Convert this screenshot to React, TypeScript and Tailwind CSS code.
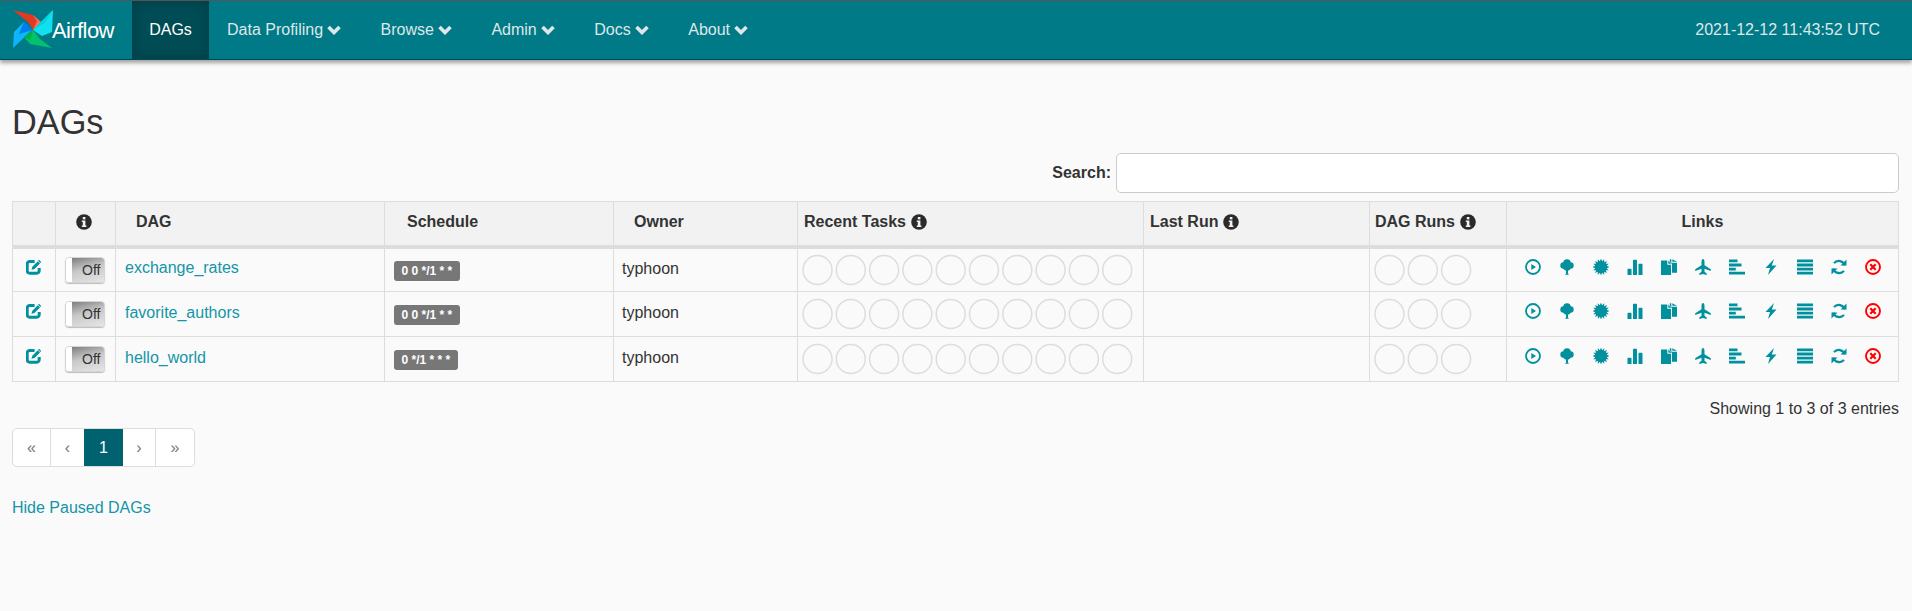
import { ReactNode } from 'react';

const NAV = ['Data Profiling', 'Browse', 'Admin', 'Docs', 'About'];
const DAGS = [
  { name: 'exchange_rates', schedule: '0 0 */1 * *' },
  { name: 'favorite_authors', schedule: '0 0 */1 * *' },
  { name: 'hello_world', schedule: '0 */1 * * *' },
];

function Glyph({ children, className = '' }: { children: ReactNode; className?: string }) {
  return (
    <svg viewBox="0 0 16 16" className={`w-4 h-4 shrink-0 ${className}`} fill="currentColor">
      {children}
    </svg>
  );
}

function Logo() {
  return (
    <svg viewBox="0 0 42 42" className="w-[42px] h-[42px] shrink-0">
      <path d="M1 1 L21 6 L29 13 L21 21 L17 14 Z" fill="#e43921" />
      <path d="M21 6 L29 13 L21 21 L25 12 Z" fill="#f4725a" />
      <path d="M41 1 L40 23 L30 27 L21 21 L29 13 Z" fill="#11e1ee" />
      <path d="M41 1 L29 13 L21 21 L33 14 Z" fill="#04d3e0" />
      <path d="M1 39 L2 23 L12 13 L20 21 Z" fill="#0cb6ff" />
      <path d="M12 13 L21 21 L7 25 Z" fill="#017cee" />
      <path d="M40 39 L18 35 L12 28 L21 21 L28 30 Z" fill="#00c26e" />
      <path d="M21 21 L12 28 L18 31 Z" fill="#00ad46" />
    </svg>
  );
}

function Info() {
  return (
    <Glyph className="text-[#2d2a2a]">
      <circle cx="8" cy="8" r="7.8" />
      <rect x="6.800" y="3" width="2.600" height="2.400" fill="#f2f2f2" />
      <path d="M5.800 6.600h3.600v5h1v1.500H5.800v-1.500h1v-3.500h-1z" fill="#f2f2f2" />
    </Glyph>
  );
}

function Chevron() {
  return (
    <svg viewBox="0 0 14 10" className="w-[14px] h-[10px] ml-1 mr-[3.5px] inline-block" fill="none" stroke="currentColor" strokeWidth="3.6">
      <path d="M1.500 2 L7 7.500 L12.500 2" />
    </svg>
  );
}

function Edit() {
  return (
    <Glyph className="text-[#00909e]">
      <path d="M13.200 9v2.800a2.400 2.400 0 0 1-2.400 2.400H3.600a2.400 2.400 0 0 1-2.400-2.400V5a2.400 2.400 0 0 1 2.400-2.400h5" fill="none" stroke="currentColor" strokeWidth="3" />
      <path d="M5.500 10.800l.8-3 5.500-5.600 2.200 2.200-5.500 5.600z" />
      <path d="M13 .8l2.200 2.200-.9.900-2.200-2.200z" />
    </Glyph>
  );
}

function Burst() {
  const pts = Array.from({ length: 32 }, (_, i) => {
    const r = i % 2 ? 5.800 : 8.400;
    const a = (i * Math.PI) / 16;
    return `${(8 + r * Math.cos(a)).toFixed(2)},${(8 + r * Math.sin(a)).toFixed(2)}`;
  }).join(' ');
  return <polygon points={pts} />;
}

const LINK_ICONS: ReactNode[] = [
  <Glyph key="run">
    <circle cx="8" cy="8" r="7" fill="none" stroke="currentColor" strokeWidth="1.800" />
    <path d="M6.300 4.900 L11 8 L6.300 11.100 Z" />
  </Glyph>,
  <Glyph key="tree">
    <circle cx="8" cy="4" r="3.800" />
    <circle cx="4.500" cy="6.500" r="3.200" />
    <circle cx="11.500" cy="6.500" r="3.200" />
    <circle cx="8" cy="8" r="3.800" />
    <path d="M7 9h2v5.500l1 1.300H6l1-1.300z" />
  </Glyph>,
  <Glyph key="graph">
    <Burst />
  </Glyph>,
  <Glyph key="duration">
    <path d="M.5 10.500a.8.800 0 0 1 .8-.8h2.400a.8.800 0 0 1 .8.800V16h-4zM6 1.500a.8.800 0 0 1 .8-.8h2.400a.8.800 0 0 1 .8.800V16H6zM11.500 5.500a.8.800 0 0 1 .8-.8h2.400a.8.800 0 0 1 .8.800V16h-4z" />
  </Glyph>,
  <Glyph key="tries">
    <path d="M0 1.500h6.300v4.200H10V16H0z" />
    <path d="M7.300 1.500V4.700h3.200z" />
    <path d="M10.300 .3v3.500H16v10h-5V5L8.800 2.500V.3z" />
    <path d="M11.300 .3V2.800H16z" />
  </Glyph>,
  <Glyph key="landing">
    <path d="M8 0c1 0 1.500 1.300 1.500 3.200v3l6.300 4v1.900L9.500 9.700v3l2.200 1.800V16L8 15l-3.700 1v-1.500l2.200-1.800v-3L.2 12.100v-1.900l6.300-4v-3C6.500 1.300 7 0 8 0z" />
  </Glyph>,
  <Glyph key="gantt">
    <path d="M0 .5h8.500v2.800H0zM0 4.600h12.500v2.800H0zM0 8.700h6.800v2.800H0zM0 12.800h16v2.800H0z" />
  </Glyph>,
  <Glyph key="code">
    <path d="M11 0 L2.500 9 L7 9 L5 16 L13.500 6.500 L8.800 6.500 Z" />
  </Glyph>,
  <Glyph key="logs">
    <path d="M0 .5h16v2.800H0zM0 4.600h16v2.800H0zM0 8.700h16v2.800H0zM0 12.800h16v2.800H0z" />
  </Glyph>,
  <Glyph key="refresh">
    <path d="M13.800 5.800A6.300 6.300 0 0 0 3 3.500" fill="none" stroke="currentColor" strokeWidth="2.200" transform="translate(0 .6)" />
    <path d="M2.200 10.200A6.300 6.300 0 0 0 13 12.500" fill="none" stroke="currentColor" strokeWidth="2.200" transform="translate(0 -.6)" />
    <path d="M15.500 .5V6.500H9.500z" />
    <path d="M.5 15.500V9.500h6z" />
  </Glyph>,
  <Glyph key="delete" className="text-[#ff0000]">
    <circle cx="8" cy="8" r="7" fill="none" stroke="currentColor" strokeWidth="1.900" />
    <path d="M5.300 5.300 L10.700 10.700 M10.700 5.300 L5.300 10.700" stroke="currentColor" strokeWidth="2.200" />
  </Glyph>,
];

function Circles({ count }: { count: number }) {
  return (
    <svg width={count * 33.3 + 2} height="32" className="block">
      {Array.from({ length: count }, (_, i) => (
        <circle key={i} cx={15.500 + i * 33.300} cy="16" r="14.500" fill="none" stroke="#dddddd" strokeWidth="1.500" />
      ))}
    </svg>
  );
}

function Toggle() {
  return (
    <div className="ml-[9px] w-10 h-[26px] flex rounded-[4px] border border-[#d4d4d4] overflow-hidden shadow-[0_1px_1px_rgba(0,0,0,0.25)]">
      <div className="w-[6px] bg-white" />
      <div className="flex-1 bg-linear-[165deg] from-[#7f7f7f] via-[#c8c8c8] via-45% to-[#e6e6e6] text-[14px] leading-[24px] text-[#333333] pl-[10px]">
        Off
      </div>
    </div>
  );
}

export default function App() {
  const th = 'border border-[#dddddd] border-b-[4px] bg-[#f2f2f2] h-[45px] font-bold align-middle pb-[3px]';
  const td = 'border border-[#dddddd] h-[45px] align-middle';

  return (
    <div className="min-h-[611px] bg-[#fafafa] text-[16px] text-[#333333] font-['Liberation_Sans',Arial,sans-serif]">
      <nav className="h-[60px] bg-[#007a87] border-t border-[#555555] border-b border-b-[#004c55] shadow-[0_3px_4px_rgba(0,0,0,0.35)] flex items-stretch text-[#dfe7e8]">
        <div className="w-[132px] pl-[12px] flex items-center shrink-0">
          <Logo />
          <span className="ml-[-2px] text-[22px] tracking-[-0.6px] text-white">Airflow</span>
        </div>
        <div className="w-[77px] flex items-center justify-center text-white bg-[#004c55] shadow-[inset_0_0_14px_rgba(0,0,0,0.2)]">
          DAGs
        </div>
        <div className="flex items-stretch">
          {NAV.map((item) => (
            <div key={item} className="px-[18px] flex items-center">
              {item}
              <Chevron />
            </div>
          ))}
        </div>
        <div className="ml-auto pr-[32px] flex items-center">2021-12-12 11:43:52 UTC</div>
      </nav>

      <main className="pl-3 pr-[13px]">
        <h1 className="mt-[43px] text-[34.3px] leading-[38px] font-normal text-[#333333]">DAGs</h1>

        <div className="mt-[12px] flex items-center justify-end gap-[5px]">
          <label className="font-bold">Search:</label>
          <input className="w-[783px] h-[40px] bg-white border border-[#cccccc] rounded-[5px]" />
        </div>

        <table className="mt-[8px] w-full table-fixed border-collapse">
          <colgroup>
            <col className="w-[43px]" />
            <col className="w-[60px]" />
            <col className="w-[269px]" />
            <col className="w-[229px]" />
            <col className="w-[184px]" />
            <col className="w-[346px]" />
            <col className="w-[226px]" />
            <col className="w-[137px]" />
            <col className="w-[392px]" />
          </colgroup>
          <thead>
            <tr>
              <th className={th} />
              <th className={`${th} pr-[3px]`}>
                <div className="flex justify-center"><Info /></div>
              </th>
              <th className={`${th} text-left pl-[20px]`}>DAG</th>
              <th className={`${th} text-left pl-[22px]`}>Schedule</th>
              <th className={`${th} text-left pl-[20px]`}>Owner</th>
              <th className={`${th} text-left pl-[6px]`}>
                <div className="flex items-center gap-[5px]">Recent Tasks <Info /></div>
              </th>
              <th className={`${th} text-left pl-[6px]`}>
                <div className="flex items-center gap-[5px]">Last Run <Info /></div>
              </th>
              <th className={`${th} text-left pl-[5px]`}>
                <div className="flex items-center gap-[5px]">DAG Runs <Info /></div>
              </th>
              <th className={`${th} text-center`}>Links</th>
            </tr>
          </thead>
          <tbody>
            {DAGS.map((dag) => (
              <tr key={dag.name}>
                <td className={td}>
                  <div className="flex justify-center pb-[6px]"><Edit /></div>
                </td>
                <td className={td}><Toggle /></td>
                <td className={`${td} pl-[9px] pb-[3px] text-[#1495a8]`}>{dag.name}</td>
                <td className={`${td} pl-[9px]`}>
                  <span className="inline-block h-5 px-[7.5px] rounded-[3px] bg-[#777777] text-white text-[12px] leading-[20px] font-bold">
                    {dag.schedule}
                  </span>
                </td>
                <td className={`${td} pl-[8px] pb-[2px]`}>typhoon</td>
                <td className={`${td} pl-[4px]`}><Circles count={10} /></td>
                <td className={td} />
                <td className={`${td} pl-[4px]`}><Circles count={3} /></td>
                <td className={td}>
                  <div className="flex justify-center gap-[18px] pb-[6px] text-[#00909e]">{LINK_ICONS}</div>
                </td>
              </tr>
            ))}
          </tbody>
        </table>

        <div className="mt-[17px] text-right leading-[20px]">Showing 1 to 3 of 3 entries</div>

        <div className="mt-[9px] w-fit h-[39px] flex bg-white border border-[#dddddd] rounded-[5px] text-[#777777] overflow-hidden">
          <div className="w-[38px] flex items-center justify-center border-r border-[#dddddd]">«</div>
          <div className="w-[33px] flex items-center justify-center">‹</div>
          <div className="w-[39px] flex items-center justify-center bg-[#00626f] text-white -my-px">1</div>
          <div className="w-[33px] flex items-center justify-center border-r border-[#dddddd]">›</div>
          <div className="w-[38px] flex items-center justify-center">»</div>
        </div>

        <div className="mt-[31px] text-[#1495a8] leading-[20px]">Hide Paused DAGs</div>
      </main>
    </div>
  );
}
